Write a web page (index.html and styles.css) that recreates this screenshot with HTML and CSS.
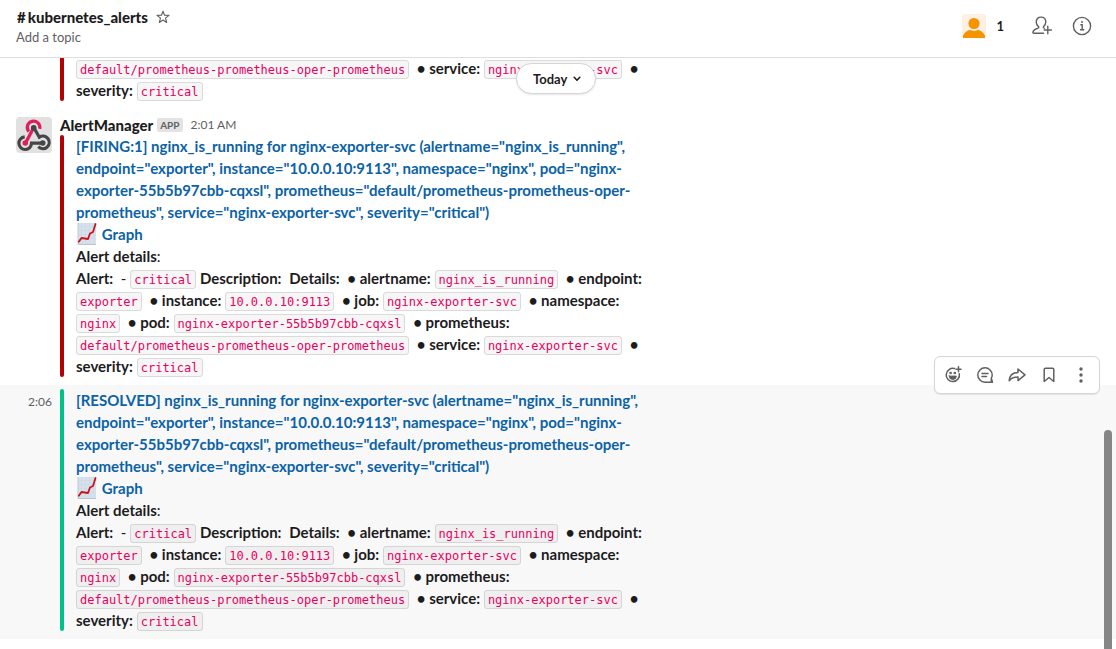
FILE: index.html
```html
<!DOCTYPE html>
<html lang="en">
<head>
<meta charset="utf-8">
<title>#kubernetes_alerts</title>
<link rel="stylesheet" href="styles.css">
</head>
<body>
<svg class="defs" aria-hidden="true">
  <symbol id="chart" viewBox="0 0 22 22">
    <rect x="2" y="0" width="18" height="22" fill="#d6e1eb"/>
    <path d="M2 3.500h18M2 7.500h18M2 11.500h18M2 15.500h18M5.500 0v22M9.500 0v22M13.500 0v22M17.500 0v22" stroke="#c9d6e2" stroke-width=".5"/>
    <path d="M2 0v21.500h18" fill="none" stroke="#b4bec8" stroke-width=".8"/>
    <path d="M2.800 18.800 5.500 15l6.500 1 2-5.500 3-1.500 2.500-8" fill="none" stroke="#c8141c" stroke-width="1.800" stroke-linejoin="round" stroke-linecap="round"/>
  </symbol>
</svg>

<header class="header">
  <div class="header-main">
    <div class="title-row">
      <h1 class="title"><span class="hash">#</span>kubernetes_alerts</h1>
      <button class="icon-button" aria-label="Star channel">
        <svg width="14" height="14" viewBox="0 0 14 14" fill="none" stroke="#616061" stroke-width="1.100" stroke-linejoin="round"><path d="M7 1.200l1.500 4.100 4.500.1-3.500 2.700 1.200 4.400L7 10l-3.700 2.500 1.200-4.400L1 5.400l4.500-.1z"/></svg>
      </button>
    </div>
    <button class="topic">Add a topic</button>
  </div>
  <div class="header-actions">
    <button class="members" aria-label="1 member">
      <svg width="24" height="24" viewBox="0 0 24 24"><rect width="24" height="24" rx="3" fill="#fff0e4"/><circle cx="12" cy="9.500" r="5.600" fill="#f59300"/><path d="M1 24v-2.500C3 17.800 6.500 16 8 16c1 0 2.300 1 4 1s3-1 4-1c1.500 0 5 1.800 7 5.500V24z" fill="#f59300"/></svg>
      <span>1</span>
    </button>
    <button class="icon-button" aria-label="Add people">
      <svg width="20" height="20" viewBox="0 0 20 20" fill="none" stroke="#616061" stroke-width="1.400" stroke-linecap="round" stroke-linejoin="round"><path d="M11.500 17.300H2c-1 0-1.300-.7-1-1.500.5-1.500 2-2.600 5-3.600 1-.4 1-1 .4-1.600-1-1-2.200-2.400-2.200-4.500 0-3 2-5 4.800-5s4.800 2 4.800 5c0 2.100-1.200 3.500-2.200 4.500-.6.700-.3 1.300.6 1.600M15.800 10.300v7.400M12.200 14h7.300"/></svg>
    </button>
    <button class="icon-button" aria-label="Channel details">
      <svg width="20" height="20" viewBox="0 0 20 20" fill="none" stroke="#616061" stroke-width="1.400"><circle cx="10" cy="10" r="8.600"/><path d="M8.300 8.700h1.900v5M8 13.800h4.300"/><circle cx="10" cy="6" r="1" fill="#616061" stroke="none"/></svg>
    </button>
  </div>
</header>

<main class="messages">
  <button class="day">Today
    <svg width="8" height="6" viewBox="0 0 8 6" fill="none" stroke="#1d1c1d" stroke-width="1.600" stroke-linecap="round" stroke-linejoin="round"><path d="M1.200 1.300 4 4.200l2.800-2.900"/></svg>
  </button>

  <article class="message clipped">
    <div class="gutter"></div>
    <div class="attachment firing">
      <div class="body"><code>default/prometheus-prometheus-oper-prometheus</code> &nbsp;<b>• service:</b> <code>nginx-exporter-svc</code> &nbsp;<b>• severity:</b> <code>critical</code></div>
    </div>
  </article>

  <article class="message first">
    <div class="gutter">
      <svg class="avatar" width="36" height="36" viewBox="0 0 36 36" fill="none" stroke-width="3.200"><rect width="36" height="36" rx="4" fill="#e2e1e2"/>
        <path d="M12.800 14.600A6.300 6.300 0 1 1 23.700 11.800" stroke="#e01e5a"/><path d="M17.700 10.500 13 19.500Q11.800 22 9.600 25.600" stroke="#e01e5a"/>
        <path d="M17.800 10.500 23.300 20.200A6.300 6.300 0 1 1 22.300 29.700" stroke="#454447"/>
        <path d="M8.700 19.900A6.300 6.300 0 1 0 15.500 26.200H26.500" stroke="#454447"/>
        <circle cx="17.700" cy="10.700" r="2.800" fill="#454447"/><circle cx="9.300" cy="26" r="2.800" fill="#e01e5a"/><circle cx="26.700" cy="26" r="2.800" fill="#454447"/>
      </svg>
    </div>
    <div class="content">
      <div class="byline"><a class="sender" href="#">AlertManager</a><span class="badge">APP</span><time class="time">2:01 AM</time></div>
      <div class="attachment firing">
        <div class="body">
          <a class="alert-link" href="#">[FIRING:1] nginx_is_running for nginx-exporter-svc (alertname="nginx_is_running", endpoint="exporter", instance="10.0.0.10:9113", namespace="nginx", pod="nginx-exporter-55b5b97cbb-cqxsl", prometheus="default/prometheus-prometheus-oper-prometheus", service="nginx-exporter-svc", severity="critical")</a>
          <div><svg class="emoji" role="img" aria-label="chart"><use href="#chart"/></svg> <a class="alert-link" href="#">Graph</a></div>
          <div><b>Alert details</b>:</div>
          <div><b>Alert:</b> &nbsp;- <code>critical</code> <b>Description:</b> &nbsp;<b>Details:</b> &nbsp;<b>• alertname:</b> <code>nginx_is_running</code> &nbsp;<b>• endpoint:</b> <code>exporter</code> &nbsp;<b>• instance:</b> <code>10.0.0.10:9113</code> &nbsp;<b>• job:</b> <code>nginx-exporter-svc</code> &nbsp;<b>• namespace:</b> <code>nginx</code> &nbsp;<b>• pod:</b> <code>nginx-exporter-55b5b97cbb-cqxsl</code> &nbsp;<b>• prometheus:</b> <code>default/prometheus-prometheus-oper-prometheus</code> &nbsp;<b>• service:</b> <code>nginx-exporter-svc</code> &nbsp;<b>• severity:</b> <code>critical</code></div>
        </div>
      </div>
    </div>
  </article>

  <article class="message hovered">
    <div class="gutter"><time class="time">2:06</time></div>
    <div class="attachment resolved">
      <div class="body">
        <a class="alert-link" href="#">[RESOLVED] nginx_is_running for nginx-exporter-svc (alertname="nginx_is_running", endpoint="exporter", instance="10.0.0.10:9113", namespace="nginx", pod="nginx-exporter-55b5b97cbb-cqxsl", prometheus="default/prometheus-prometheus-oper-prometheus", service="nginx-exporter-svc", severity="critical")</a>
        <div><svg class="emoji" role="img" aria-label="chart"><use href="#chart"/></svg> <a class="alert-link" href="#">Graph</a></div>
        <div><b>Alert details</b>:</div>
        <div><b>Alert:</b> &nbsp;- <code>critical</code> <b>Description:</b> &nbsp;<b>Details:</b> &nbsp;<b>• alertname:</b> <code>nginx_is_running</code> &nbsp;<b>• endpoint:</b> <code>exporter</code> &nbsp;<b>• instance:</b> <code>10.0.0.10:9113</code> &nbsp;<b>• job:</b> <code>nginx-exporter-svc</code> &nbsp;<b>• namespace:</b> <code>nginx</code> &nbsp;<b>• pod:</b> <code>nginx-exporter-55b5b97cbb-cqxsl</code> &nbsp;<b>• prometheus:</b> <code>default/prometheus-prometheus-oper-prometheus</code> &nbsp;<b>• service:</b> <code>nginx-exporter-svc</code> &nbsp;<b>• severity:</b> <code>critical</code></div>
      </div>
    </div>
    <div class="toolbar">
      <button class="tool" aria-label="Add reaction"><svg viewBox="0 0 18 18"><path d="M10.500 2.600A6.600 6.600 0 1 0 15.300 7.700M14.500.8v5M12 3.300h5"/><path d="M5.200 10h7.200a3.600 3.600 0 0 1-7.200 0z" fill="#616061" stroke-width=".8"/><circle cx="6.600" cy="7" r=".6"/><circle cx="10.800" cy="7" r=".6"/></svg></button>
      <button class="tool" aria-label="Start a thread"><svg viewBox="0 0 18 18"><path d="M15.300 12.200V16.200H9A7.200 7.200 0 1 1 16.200 9c0 1.200-.3 2.200-.9 3.200l1.200 4H12M6 7.500h6M6 10.500h4.500"/></svg></button>
      <button class="tool" aria-label="Share message"><svg viewBox="0 0 18 18"><path d="M10 3v3.500C4.500 6.500 1.500 9 1.200 14.800c2-2.900 4.500-3.800 8.800-3.800v3.600L17 8.800z"/></svg></button>
      <button class="tool" aria-label="Save message"><svg viewBox="0 0 18 18"><path d="M4.200 15.500V3.500q0-1.300 1.300-1.300h7q1.300 0 1.300 1.300v12L9 11.500z"/></svg></button>
      <button class="tool" aria-label="More actions"><svg viewBox="0 0 18 18"><g fill="#616061" stroke="none"><circle cx="9" cy="3" r="1.700"/><circle cx="9" cy="9" r="1.700"/><circle cx="9" cy="15" r="1.700"/></g></svg></button>
    </div>
  </article>
  <div class="scroll-thumb"></div>
</main>
</body>
</html>
```
FILE: styles.css
```css
* { box-sizing: border-box; }

body {
  display: flex;
  flex-direction: column;
  height: 100vh;
  margin: 0;
  overflow: hidden;
  background: #fff;
  color: #1d1c1d;
  font: 15px/22px Lato, "Liberation Sans", sans-serif;
}

button {
  padding: 0;
  border: 0;
  background: none;
  color: inherit;
  font: inherit;
  cursor: pointer;
}

svg { display: block; }
b { font-weight: 700; }
a { text-decoration: none; }

.defs {
  position: absolute;
  width: 0;
  height: 0;
}

.header {
  display: flex;
  flex: none;
  justify-content: space-between;
  padding: 6px 24px 11px 16px;
  border-bottom: 1px solid #dddddd;
}

.title-row {
  display: flex;
  align-items: center;
  gap: 8px;
}

.title {
  margin: 0;
  padding-left: 1px;
  font-size: 15px;
  font-weight: 900;
  line-height: 22px;
}

.hash { margin-right: 2px; }

.topic {
  display: block;
  color: #616061;
  font-size: 13px;
  line-height: 18px;
}

.header-actions {
  display: flex;
  align-items: center;
  gap: 20px;
  height: 40px;
}

.members {
  display: flex;
  align-items: center;
  gap: 10px;
  margin-right: 8px;
  font-size: 13px;
  font-weight: 700;
}

.messages {
  position: relative;
  flex: 1;
  min-height: 0;
  overflow: hidden;
}

.day {
  position: absolute;
  z-index: 2;
  top: 5px;
  left: 50%;
  display: flex;
  align-items: center;
  gap: 6px;
  height: 31px;
  margin-left: -42px;
  padding: 0 14px 0 16px;
  border: 1px solid #d5d5d5;
  border-radius: 16px;
  background: #fff;
  box-shadow: 0 1px 2px rgba(0, 0, 0, .1);
  font-size: 13px;
  font-weight: 700;
}

.message {
  position: relative;
  display: flex;
  padding: 4px 20px 8px 16px;
}

/* Scrolled partly under the header */
.message.clipped {
  margin-top: -1px;
  padding-top: 0;
}

.message.hovered { background: #f8f8f8; }

.gutter {
  flex: none;
  width: 44px;
  padding-right: 8px;
  text-align: right;
}

.avatar { margin-top: 4px; }

.time {
  color: #616061;
  font-size: 12px;
}

.byline {
  display: flex;
  align-items: center;
  gap: 4px;
  padding-top: 2px;
  line-height: 20px;
}

.sender {
  color: #1d1c1d;
  font-weight: 900;
}

.badge {
  padding: 0 3px;
  border-radius: 2px;
  background: #e3e3e3;
  color: #616061;
  font-size: 10px;
  font-weight: 700;
  line-height: 14px;
}

.byline .time { margin-left: 4px; }

.attachment {
  display: flex;
  gap: 12px;
  max-width: 600px;
}

.attachment::before {
  flex: none;
  width: 4px;
  border-radius: 4px;
  background: #b30000;
  content: "";
}

.attachment.resolved::before { background: #00c288; }

.body { min-width: 0; }

.alert-link {
  color: #0b62a6;
  font-weight: 700;
}

.emoji {
  display: inline-block;
  width: 22px;
  height: 22px;
  vertical-align: bottom;
}

code {
  padding: 2px 3px 1px;
  border: 1px solid rgba(29, 28, 29, .13);
  border-radius: 3px;
  background: rgba(29, 28, 29, .04);
  color: #e8005f;
  font: 12px/18px "DejaVu Sans Mono", "Liberation Mono", monospace;
  white-space: nowrap;
}

.toolbar {
  position: absolute;
  top: -29px;
  right: 16px;
  display: flex;
  padding: 2px;
  border: 1px solid #d5d5d5;
  border-radius: 6px;
  background: #fff;
  box-shadow: 0 1px 1px rgba(0, 0, 0, .08);
}

.tool {
  display: grid;
  place-items: center;
  width: 32px;
  height: 32px;
}

.tool svg {
  width: 18px;
  height: 18px;
  fill: none;
  stroke: #616061;
  stroke-width: 1.5;
  stroke-linecap: round;
  stroke-linejoin: round;
}

.scroll-thumb {
  position: absolute;
  right: 4px;
  bottom: 0;
  width: 8px;
  height: 37%;
  border-radius: 4px 4px 0 0;
  background: #868686;
}
```
